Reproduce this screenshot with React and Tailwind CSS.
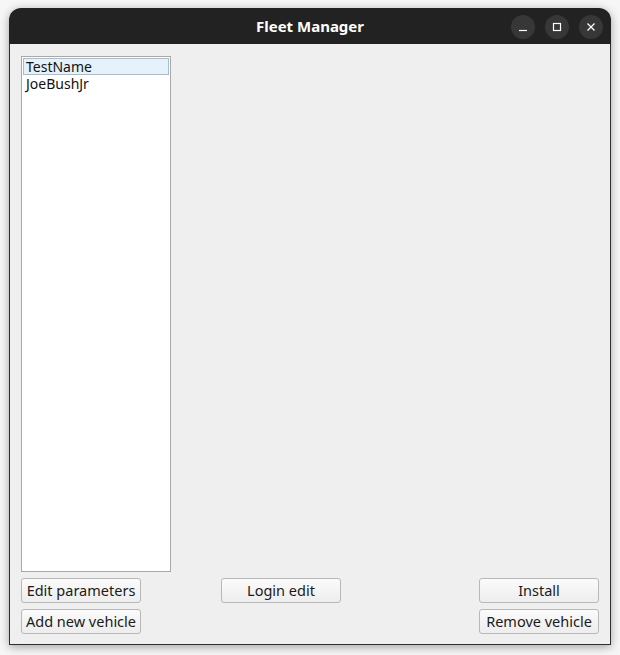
export default function App() {
  const font = { fontFamily: '"Noto Sans", "Open Sans", sans-serif' };
  const btn =
    "h-[25px] w-[120px] rounded-[3px] border border-[#b8b8b8] bg-gradient-to-b from-[#fbfbfb] to-[#ededed] text-[14.5px] text-[#1a1a1a] flex items-center justify-center leading-none";
  return (
    <div className="w-[620px] h-[655px] bg-[#f6f6f6] pt-[8px] pl-[9px]" style={font}>
      <div className="w-[602px] h-[637px] flex flex-col rounded-t-[12px] shadow-[0_2px_10px_rgba(0,0,0,0.35)]">
        <div className="h-[37px] bg-[#222222] rounded-t-[12px] flex items-center relative">
          <div className="flex-1 text-center text-white font-bold text-[15px]">Fleet Manager</div>
          <div className="absolute right-[8px] top-[7px] flex gap-[10px]">
            <div className="w-[24px] h-[24px] rounded-full bg-[#373737] flex items-center justify-center">
              <svg width="10" height="10" viewBox="0 0 10 10"><path d="M1 8.5h8" stroke="#fff" strokeWidth="1.2" /></svg>
            </div>
            <div className="w-[24px] h-[24px] rounded-full bg-[#373737] flex items-center justify-center">
              <svg width="10" height="10" viewBox="0 0 10 10"><rect x="1.5" y="1.5" width="7" height="7" fill="none" stroke="#fff" strokeWidth="1.2" /></svg>
            </div>
            <div className="w-[24px] h-[24px] rounded-full bg-[#373737] flex items-center justify-center">
              <svg width="10" height="10" viewBox="0 0 10 10"><path d="M1.5 1.5l7 7M8.5 1.5l-7 7" stroke="#fff" strokeWidth="1.3" /></svg>
            </div>
          </div>
        </div>
        <div className="flex-1 bg-[#efefef] border-x border-b border-[#2e2e2e] flex flex-col px-[11px] pt-[12px] pb-[10px]">
          <div className="w-[150px] h-[516px] bg-white border border-[#a9a9a9] p-px flex flex-col">
            <div className="h-[17px] bg-[#e5f1fb] border border-[#a6bccf] text-[14px] text-[#111] pl-[2px] flex items-center overflow-hidden"><span className="leading-[14px]">TestName</span></div>
            <div className="h-[18px] text-[14px] text-[#111] pl-[3px] flex items-center"><span className="leading-[14px]">JoeBushJr</span></div>
          </div>
          <div className="mt-[6px] flex">
            <div className="flex flex-col gap-[6px]">
              <div className={btn}>Edit parameters</div>
              <div className={btn}>Add new vehicle</div>
            </div>
            <div className="flex flex-col gap-[6px] ml-[80px]">
              <div className={btn}>Login edit</div>
            </div>
            <div className="flex flex-col gap-[6px] ml-auto">
              <div className={btn}>Install</div>
              <div className={btn}>Remove vehicle</div>
            </div>
          </div>
        </div>
      </div>
    </div>
  );
}
